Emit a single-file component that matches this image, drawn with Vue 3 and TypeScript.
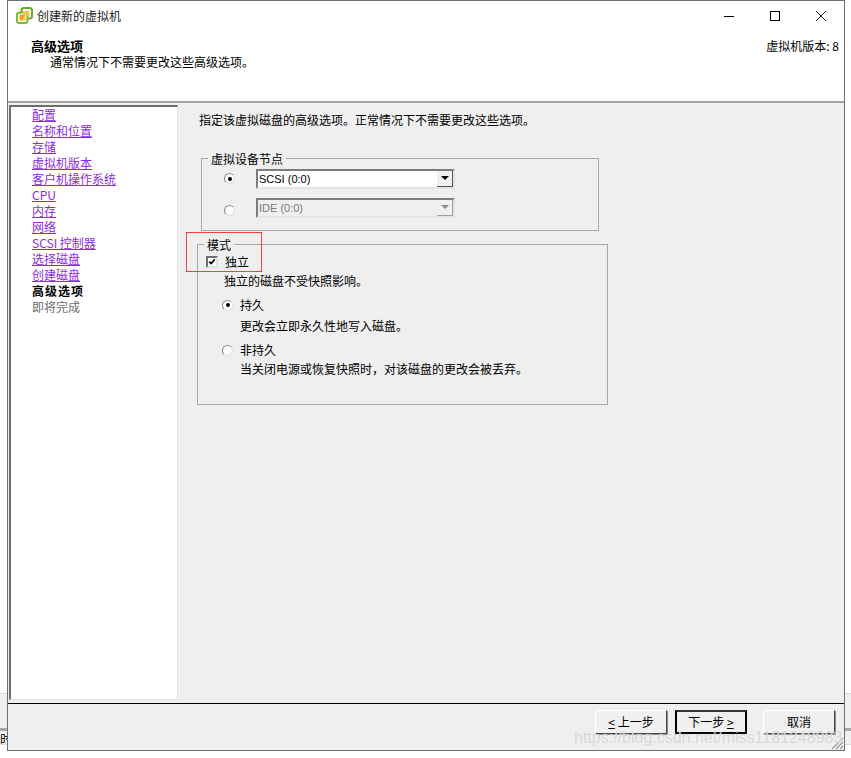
<script setup lang="ts">
const steps: { label: string; state: 'link' | 'current' | 'todo' }[] = [
  { label: '配置', state: 'link' },
  { label: '名称和位置', state: 'link' },
  { label: '存储', state: 'link' },
  { label: '虚拟机版本', state: 'link' },
  { label: '客户机操作系统', state: 'link' },
  { label: 'CPU', state: 'link' },
  { label: '内存', state: 'link' },
  { label: '网络', state: 'link' },
  { label: 'SCSI 控制器', state: 'link' },
  { label: '选择磁盘', state: 'link' },
  { label: '创建磁盘', state: 'link' },
  { label: '高级选项', state: 'current' },
  { label: '即将完成', state: 'todo' },
]
</script>

<template>
  <div class="page">
    <div class="behind behind-left"><span class="behind-text">时</span></div>
    <div class="behind behind-right"></div>

    <div class="window">
      <div class="titlebar">
        <svg class="logo" width="17" height="17" viewBox="0 0 17 17">
          <rect x="5.5" y="1" width="10.5" height="10.5" rx="2.5" fill="#fff" stroke="#6aa82e" stroke-width="2" />
          <rect x="1" y="5.5" width="10.5" height="10.5" rx="2.5" fill="#fff" stroke="#7cb83c" stroke-width="2" />
          <path d="M7 4h6.5v5.5H11V6.5H7z" fill="#f5c542" />
          <path d="M3.5 7.5H9.5v6H3.5z" fill="#eea11d" />
          <path d="M5.5 13.5L9.5 7.5v6z" fill="#f7d35a" />
        </svg>
        <span class="title">创建新的虚拟机</span>
        <div class="controls">
          <svg width="12" height="12" viewBox="0 0 12 12"><path d="M1 6.5h10" stroke="#000" fill="none" /></svg>
          <svg width="12" height="12" viewBox="0 0 12 12"><rect x="1.5" y="1.5" width="9" height="9" stroke="#000" fill="none" /></svg>
          <svg width="12" height="12" viewBox="0 0 12 12"><path d="M1 1l10 10M11 1L1 11" stroke="#222" fill="none" /></svg>
        </div>
      </div>

      <header class="header">
        <div class="heading">
          <div class="heading-title">高级选项</div>
          <div class="heading-sub">通常情况下不需要更改这些高级选项。</div>
        </div>
        <div class="version">虚拟机版本: 8</div>
      </header>

      <div class="body">
        <nav class="nav">
          <a
            v-for="s in steps"
            :key="s.label"
            class="step"
            :class="s.state"
          >{{ s.label }}</a>
        </nav>

        <main class="content">
          <p class="intro">指定该虚拟磁盘的高级选项。正常情况下不需要更改这些选项。</p>

          <fieldset class="group group-node">
            <legend class="legend">虚拟设备节点</legend>
            <div class="node-row">
              <span class="radio on"></span>
              <div class="select">
                <span class="select-value">SCSI (0:0)</span>
                <span class="select-btn"><i class="arrow"></i></span>
              </div>
            </div>
            <div class="node-row">
              <span class="radio low"></span>
              <div class="select disabled">
                <span class="select-value">IDE (0:0)</span>
                <span class="select-btn"><i class="arrow"></i></span>
              </div>
            </div>
          </fieldset>

          <fieldset class="group group-mode">
            <legend class="legend">模式</legend>
            <div class="check-row">
              <span class="checkbox">
                <svg width="10" height="10" viewBox="0 0 10 10"><path d="M1.5 4.5l2.5 2.5L8.5 1.5" fill="none" stroke="#000" stroke-width="2" /></svg>
              </span>
              <span>独立</span>
            </div>
            <div class="check-desc">独立的磁盘不受快照影响。</div>
            <div class="radio-row first">
              <span class="radio on"></span>
              <span>持久</span>
            </div>
            <div class="radio-desc desc-1">更改会立即永久性地写入磁盘。</div>
            <div class="radio-row second">
              <span class="radio"></span>
              <span>非持久</span>
            </div>
            <div class="radio-desc desc-2">当关闭电源或恢复快照时，对该磁盘的更改会被丢弃。</div>
          </fieldset>

          <div class="red-mark"></div>
        </main>
      </div>

      <footer class="footer">
        <button class="btn"><u>&lt;</u> 上一步</button>
        <button class="btn default">下一步 <u>&gt;</u></button>
        <button class="btn cancel">取消</button>
        <svg class="grip" width="14" height="14" viewBox="0 0 14 14">
          <path d="M13 2L2 13M13 6L6 13M13 10L10 13" stroke="#9a9a9a" stroke-width="1.2" fill="none" />
        </svg>
      </footer>
    </div>

    <div class="watermark">https://blog.csdn.net/miss1181248983</div>
  </div>
</template>

<style>
html, body { margin: 0; background: #fff; }
</style>

<style scoped>
.page {
  position: relative;
  width: 851px;
  height: 758px;
  overflow: hidden;
  background: #fff;
  font-family: "Noto Sans CJK SC", "Liberation Sans", sans-serif;
  font-size: 12px;
  line-height: 16px;
  color: #000;
}
.behind {
  position: absolute;
  top: 693px;
  height: 52px;
  background: #f0f0f0;
  border-top: 1px solid #dcdcdc;
  border-bottom: 1px solid #dcdcdc;
  box-sizing: border-box;
  overflow: hidden;
}
.behind::after {
  content: "";
  position: absolute;
  left: 0;
  right: 0;
  top: 34px;
  height: 3px;
  background: #a8a8a8;
}
.behind-left { left: 0; width: 8px; }
.behind-right { left: 844px; width: 7px; }
.behind-text {
  position: absolute;
  left: 0;
  top: 37px;
  white-space: nowrap;
}
.window {
  position: absolute;
  left: 7px;
  top: 0;
  width: 838px;
  height: 751px;
  box-sizing: border-box;
  border: 1px solid #6f6f6f;
  background: #fff;
  display: flex;
  flex-direction: column;
}
.titlebar {
  height: 29px;
  flex: none;
  display: flex;
  align-items: center;
  padding: 0 0 0 8px;
}
.logo { margin-right: 4px; }
.title { color: #222; margin-top: 1px; }
.controls {
  margin-left: auto;
  display: flex;
  gap: 34px;
  padding-right: 17px;
  margin-top: 1px;
}
.header {
  height: 73px;
  flex: none;
  box-sizing: border-box;
  display: flex;
  justify-content: space-between;
  padding: 8px 5px 0 23px;
  border-bottom: 2px solid #a3a3a3;
}
.heading-title { font-weight: 700; font-size: 13px; }
.heading-sub { padding-left: 19px; }
.body {
  flex: 1;
  min-height: 0;
  display: flex;
  background: #efefef;
  border-bottom: 1px solid #000;
  padding: 2px 0 3px 1px;
}
.nav {
  width: 169px;
  box-sizing: border-box;
  flex: none;
  background: #fff;
  border: 1px solid #e2e2e2;
  border-top: 2px solid #6e6e6e;
  border-left: 2px solid #6e6e6e;
  padding: 0 0 0 21px;
  display: flex;
  flex-direction: column;
}
.step { height: 16px; line-height: 16px; white-space: nowrap; }
.step.link { color: #8a2be2; text-decoration: underline; }
.step.current { font-weight: 700; letter-spacing: 1px; }
.step.todo { color: #6d6d6d; }
.content {
  position: relative;
  flex: 1;
  min-width: 0;
}
.intro { margin: 7px 0 0 21px; }
.group {
  margin: 0;
  padding: 0;
  border: 1px solid #a8a8a8;
  box-sizing: border-box;
  min-width: 0;
}
.legend {
  position: relative;
  top: 1px;
  padding: 0 3px;
  margin-left: 6px;
  line-height: 14px;
}
.group-node {
  margin: 23px 0 0 23px;
  width: 398px;
  height: 80px;
  padding-top: 4px;
}
.group-mode {
  margin: 6px 0 0 19px;
  width: 411px;
  height: 168px;
}
.node-row {
  display: flex;
  align-items: center;
  height: 19px;
  margin-bottom: 10px;
  padding-left: 22px;
}
.node-row .radio { margin-right: 21px; }
.node-row .radio.low { margin-top: 6px; }
.select {
  width: 199px;
  height: 20px;
  box-sizing: border-box;
  display: flex;
  align-items: center;
  justify-content: space-between;
  background: #fff;
  border: 2px solid #7c7c7c;
  border-right-color: #e4e4e4;
  border-bottom-color: #e4e4e4;
  padding-left: 1px;
  font-size: 11px;
  font-family: "Liberation Sans", sans-serif;
}
.select.disabled { background: #efefef; color: #7a7a7a; }
.select-btn {
  width: 16px;
  height: 16px;
  background: #f0f0f0;
  border-right: 1px solid #555;
  border-bottom: 1px solid #555;
  box-sizing: border-box;
  display: flex;
  align-items: center;
  justify-content: center;
}
.arrow {
  border: 4px solid transparent;
  border-top: 4px solid #000;
  border-bottom: 0;
}
.disabled .arrow { border-top-color: #8a8a8a; }
.disabled .select-btn { border-color: #a0a0a0; }
.radio {
  width: 11px;
  height: 11px;
  flex: none;
  box-sizing: border-box;
  border-radius: 50%;
  background: #fff;
  border: 1px solid;
  border-color: #8a8a8a #dedede #dedede #8a8a8a;
  display: inline-flex;
  align-items: center;
  justify-content: center;
}
.radio.on::after {
  content: "";
  width: 4px;
  height: 4px;
  border-radius: 50%;
  background: #000;
}
.check-row {
  display: flex;
  align-items: center;
  margin-top: 3px;
  padding-left: 8px;
}
.checkbox {
  width: 12px;
  height: 12px;
  box-sizing: border-box;
  border: 2px solid;
  border-color: #6f6f6f #e2e2e2 #e2e2e2 #6f6f6f;
  background: #fff;
  margin-right: 7px;
  display: flex;
  align-items: center;
  justify-content: center;
}
.check-desc { padding-left: 26px; margin-top: 3px; }
.radio-row {
  display: flex;
  align-items: center;
  padding-left: 24px;
}
.radio-row .radio { margin-right: 7px; }
.radio-row.first { margin-top: 8px; }
.radio-row.second { margin-top: 8px; }
.radio-desc { padding-left: 42px; }
.desc-1 { margin-top: 5px; }
.desc-2 { margin-top: 3px; }
.red-mark {
  position: absolute;
  left: 8px;
  top: 127px;
  width: 76px;
  height: 40px;
  box-sizing: border-box;
  border: 1px solid #f04438;
}
.footer {
  position: relative;
  height: 46px;
  flex: none;
  box-sizing: border-box;
  background: #efefef;
  display: flex;
  align-items: flex-start;
  padding: 6px 9px 0 0;
  justify-content: flex-end;
  gap: 8px;
}
.btn {
  width: 72px;
  height: 24px;
  box-sizing: border-box;
  margin: 0;
  padding: 0;
  background: #f0f0f0;
  border: 1px solid;
  border-color: #fff #444 #444 #fff;
  box-shadow: 1px 1px 0 #8a8a8a;
  font: inherit;
  color: #000;
}
.btn.default { border: 2px solid #000; border-top-color: #333; box-shadow: none; }
.btn.cancel { margin-left: 8px; }
.grip { position: absolute; right: 0; bottom: 0; }
.watermark {
  position: absolute;
  left: 574px;
  top: 727px;
  font-family: "Liberation Sans", sans-serif;
  font-size: 16px;
  line-height: 22px;
  color: rgba(205, 205, 205, 0.8);
  text-shadow: 0 0 1px rgba(255, 255, 255, 0.7);
  white-space: nowrap;
  pointer-events: none;
}
</style>
